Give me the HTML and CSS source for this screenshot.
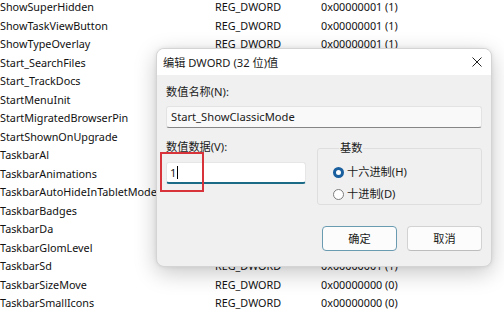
FILE: index.html
```html
<!DOCTYPE html>
<html lang="zh-CN">
<head>
<meta charset="utf-8">
<link rel="stylesheet" href="styles.css">
</head>
<body>
<div class="list">
  <div class="row"><span class="name">ShowSuperHidden</span><span class="type">REG_DWORD</span><span class="val">0x00000001 (1)</span></div>
  <div class="row"><span class="name">ShowTaskViewButton</span><span class="type">REG_DWORD</span><span class="val">0x00000001 (1)</span></div>
  <div class="row"><span class="name">ShowTypeOverlay</span><span class="type">REG_DWORD</span><span class="val">0x00000001 (1)</span></div>
  <div class="row"><span class="name">Start_SearchFiles</span><span class="type">REG_DWORD</span><span class="val">0x00000002 (2)</span></div>
  <div class="row"><span class="name">Start_TrackDocs</span><span class="type">REG_DWORD</span><span class="val">0x00000001 (1)</span></div>
  <div class="row"><span class="name">StartMenuInit</span><span class="type">REG_DWORD</span><span class="val">0x0000000d (13)</span></div>
  <div class="row"><span class="name">StartMigratedBrowserPin</span><span class="type">REG_DWORD</span><span class="val">0x00000001 (1)</span></div>
  <div class="row"><span class="name">StartShownOnUpgrade</span><span class="type">REG_DWORD</span><span class="val">0x00000001 (1)</span></div>
  <div class="row"><span class="name">TaskbarAl</span><span class="type">REG_DWORD</span><span class="val">0x00000000 (0)</span></div>
  <div class="row"><span class="name">TaskbarAnimations</span><span class="type">REG_DWORD</span><span class="val">0x00000001 (1)</span></div>
  <div class="row"><span class="name">TaskbarAutoHideInTabletMode</span><span class="type">REG_DWORD</span><span class="val">0x00000000 (0)</span></div>
  <div class="row"><span class="name">TaskbarBadges</span><span class="type">REG_DWORD</span><span class="val">0x00000001 (1)</span></div>
  <div class="row"><span class="name">TaskbarDa</span><span class="type">REG_DWORD</span><span class="val">0x00000000 (0)</span></div>
  <div class="row"><span class="name">TaskbarGlomLevel</span><span class="type">REG_DWORD</span><span class="val">0x00000000 (0)</span></div>
  <div class="row"><span class="name">TaskbarSd</span><span class="type">REG_DWORD</span><span class="val">0x00000001 (1)</span></div>
  <div class="row"><span class="name">TaskbarSizeMove</span><span class="type">REG_DWORD</span><span class="val">0x00000000 (0)</span></div>
  <div class="row"><span class="name">TaskbarSmallIcons</span><span class="type">REG_DWORD</span><span class="val">0x00000000 (0)</span></div>
</div>

<div class="dialog">
  <div class="titlebar">
    <span class="title">编辑 DWORD (32 位)值</span>
    <svg class="close" width="10" height="10" viewBox="0 0 10 10"><path d="M0.5 0.5 L9.5 9.5 M9.5 0.5 L0.5 9.5" stroke="#222" stroke-width="1"/></svg>
  </div>
  <div class="body">
    <div class="label">数值名称(N):</div>
    <div class="field readonly">Start_ShowClassicMode</div>
    <div class="lower">
      <div class="left">
        <div class="label">数值数据(V):</div>
        <div class="field active"><span class="digit">1</span><span class="caret"></span><span class="mark"></span></div>
      </div>
      <fieldset class="group">
        <legend>基数</legend>
        <div class="radio"><span class="dot on"></span>十六进制(H)</div>
        <div class="radio"><span class="dot"></span>十进制(D)</div>
      </fieldset>
    </div>
    <div class="buttons">
      <div class="btn primary">确定</div>
      <div class="btn">取消</div>
    </div>
  </div>
</div>
</body>
</html>
```
FILE: styles.css
```css
html, body {
  margin: 0;
  padding: 0;
  background: #fff;
  width: 504px;
  height: 310px;
  overflow: hidden;
  font-family: "Noto Sans", "Noto Sans CJK SC", sans-serif;
  font-size: 10.8px;
  color: #000;
}

.list {
  margin-top: -2px;
}

.row {
  display: grid;
  grid-template-columns: 215px 106px 1fr;
  height: 18.5px;
  line-height: 18.5px;
  white-space: nowrap;
  color: #111;
}

.row span {
  overflow: hidden;
}

.dialog {
  position: absolute;
  left: 156px;
  top: 48px;
  width: 336px;
  height: 219px;
  background: #f0f0f0;
  border: 1px solid #d4d4d4;
  box-sizing: border-box;
  border-radius: 8px;
  box-shadow: 0 6px 22px rgba(0, 0, 0, 0.22), 0 0 4px rgba(0, 0, 0, 0.08);
  overflow: hidden;
  color: #1a1a1a;
  font-size: 11.2px;
}

.titlebar {
  height: 26px;
  background: #fff;
  display: flex;
  align-items: center;
  justify-content: space-between;
  padding: 0 9px 0 6px;
}

.title {
  line-height: 16px;
  padding-top: 1px;
}

.close {
  display: block;
}

.body {
  padding: 9px 9px 0 9px;
  display: flex;
  flex-direction: column;
}

.label {
  line-height: 16px;
  height: 16px;
}

.field {
  box-sizing: border-box;
  height: 22px;
  line-height: 20px;
  padding: 0 4px;
  border: 1px solid #e3e3e3;
  border-bottom-color: #868686;
  border-radius: 3px;
  background: #f9f9f9;
}

.readonly {
  margin-top: 6px;
  width: 316px;
}

.lower {
  display: flex;
  gap: 11px;
  margin-top: 11px;
}

.left {
  width: 141px;
  display: flex;
  flex-direction: column;
}

.active {
  position: relative;
  margin-top: 7px;
  background: #fff;
  border-color: #e6e6e6;
  border-bottom: 2px solid #1b6a86;
  display: flex;
  align-items: center;
  padding-left: 3px;
}

.caret {
  width: 1px;
  height: 13px;
  background: #000;
  margin-left: 1px;
}

.mark {
  position: absolute;
  left: -7px;
  top: -11px;
  width: 44px;
  height: 40px;
  border: 2.5px solid #d8333a;
  box-sizing: border-box;
}

.group {
  margin: 0;
  width: 166px;
  height: 65px;
  box-sizing: border-box;
  border: 1px solid #dedede;
  border-radius: 3px;
  padding: 5px 0 0 15px;
  position: relative;
  top: 1px;
}

.group legend {
  padding: 0 1px;
  margin-left: 6px;
  line-height: 16px;
}

.radio {
  display: flex;
  align-items: center;
  height: 22px;
  line-height: 16px;
}

.dot {
  width: 11px;
  height: 11px;
  box-sizing: border-box;
  border-radius: 50%;
  border: 1px solid #7d7d7d;
  background: #fff;
  margin-right: 3px;
}

.dot.on {
  border: 3px solid #1a5f9e;
}

.buttons {
  display: flex;
  justify-content: flex-end;
  gap: 10px;
  margin-top: 22px;
}

.btn {
  width: 75px;
  height: 25px;
  box-sizing: border-box;
  border: 1px solid #d2d2d2;
  border-bottom-color: #bdbdbd;
  border-radius: 4px;
  background: #fcfcfc;
  text-align: center;
  line-height: 23px;
}

.btn.primary {
  border-color: #6b9bb0;
}
```
